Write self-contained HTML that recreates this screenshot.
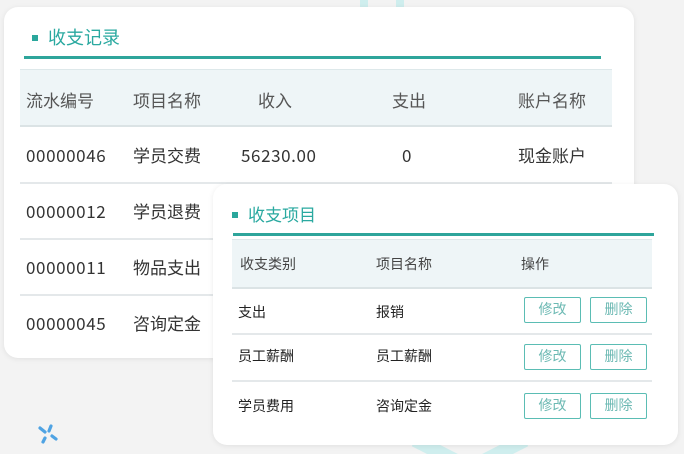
<!DOCTYPE html>
<html><head><meta charset="utf-8"><style>
*{margin:0;padding:0;box-sizing:border-box}
body{width:684px;height:454px;background:#f3f3f3;position:relative;overflow:hidden;font-family:"Noto Sans CJK SC","Liberation Sans",sans-serif}
.card{position:absolute;background:#fff;border-radius:14px;box-shadow:0 1px 6px rgba(0,0,0,.08)}
.t{position:absolute;white-space:nowrap;line-height:20px}
.sq{position:absolute;background:#2aa79c}
.ul{position:absolute;background:#2ea59b}
.hd{position:absolute;background:#eef5f7;border-top:1px solid #dde8ea;border-bottom:2px solid #dbe3e5}
.ln{position:absolute;height:2px;background:#e4e8ea}
.btn{position:absolute;width:57px;height:26px;border:1.5px solid #5bbdb4;border-radius:2px;color:#6cb9b3;font-size:14px;text-align:center;line-height:23px}
.n{letter-spacing:0.6px}
</style></head><body>
<div style="position:absolute;left:360px;top:0;width:8px;height:16px;background:#cfeeee"></div>
<div style="position:absolute;left:396px;top:0;width:8px;height:16px;background:#cfeeee"></div>
<svg style="position:absolute;left:410px;top:438px" width="120" height="16"><path d="M5 2 L60 30 L115 2" stroke="#cfeeee" stroke-width="14" fill="none"/></svg>

<div class="card" style="left:4px;top:7px;width:630px;height:351px">
<div class="sq" style="left:28px;top:28px;width:6px;height:6px"></div>
<div class="t" style="left:44px;top:20px;font-size:18px;color:#2aa9a0">收支记录</div>
<div class="ul" style="left:20px;top:49px;width:577px;height:3px"></div>
<div class="hd" style="left:16px;top:62px;width:592px;height:58px"></div>
<div class="t" style="left:22px;top:83px;font-size:17px;color:#555">流水编号</div>
<div class="t" style="left:129px;top:83px;font-size:17px;color:#555">项目名称</div>
<div class="t" style="left:254px;top:83px;font-size:17px;color:#555">收入</div>
<div class="t" style="left:388px;top:83px;font-size:17px;color:#555">支出</div>
<div class="t" style="left:514px;top:83px;font-size:17px;color:#555">账户名称</div>
<div class="t n" style="left:22px;top:138px;font-size:17px;color:#333">00000046</div>
<div class="t" style="left:129px;top:138px;font-size:17px;color:#333">学员交费</div>
<div class="t n" style="left:237px;top:138px;font-size:17px;color:#333">56230.00</div>
<div class="t" style="left:398px;top:138px;font-size:17px;color:#333">0</div>
<div class="t" style="left:514px;top:138px;font-size:17px;color:#333">现金账户</div>
<div class="ln" style="left:16px;top:175px;width:592px"></div>
<div class="t n" style="left:22px;top:194px;font-size:17px;color:#333">00000012</div>
<div class="t" style="left:129px;top:194px;font-size:17px;color:#333">学员退费</div>
<div class="ln" style="left:16px;top:231px;width:592px"></div>
<div class="t n" style="left:22px;top:250px;font-size:17px;color:#333">00000011</div>
<div class="t" style="left:129px;top:250px;font-size:17px;color:#333">物品支出</div>
<div class="ln" style="left:16px;top:287px;width:592px"></div>
<div class="t n" style="left:22px;top:306px;font-size:17px;color:#333">00000045</div>
<div class="t" style="left:129px;top:306px;font-size:17px;color:#333">咨询定金</div>
</div>

<svg style="position:absolute;left:36px;top:424px" width="24" height="22" viewBox="0 0 24 22"><g stroke="#4fa3e3" stroke-width="3.2" stroke-linecap="round"><line x1="4" y1="4" x2="9" y2="8"/><line x1="15" y1="2" x2="13" y2="7"/><line x1="16" y1="12" x2="20" y2="15"/><line x1="9" y1="14" x2="7" y2="18"/></g></svg>

<div class="card" style="left:213px;top:184px;width:465px;height:261px">
<div class="sq" style="left:19px;top:28px;width:6px;height:6px"></div>
<div class="t" style="left:35px;top:20px;font-size:17px;color:#2aa9a0">收支项目</div>
<div class="ul" style="left:20px;top:49px;width:421px;height:3px"></div>
<div class="hd" style="left:19px;top:55px;width:420px;height:50px"></div>
<div class="t" style="left:27px;top:70px;font-size:14px;color:#444">收支类别</div>
<div class="t" style="left:163px;top:70px;font-size:14px;color:#444">项目名称</div>
<div class="t" style="left:308px;top:70px;font-size:14px;color:#444">操作</div>
<div class="t" style="left:25px;top:118px;font-size:14px;color:#222">支出</div>
<div class="t" style="left:163px;top:118px;font-size:14px;color:#222">报销</div>
<div class="btn" style="left:311px;top:113px">修改</div>
<div class="btn" style="left:377px;top:113px">删除</div>
<div class="ln" style="left:19px;top:149px;width:420px"></div>
<div class="t" style="left:25px;top:162px;font-size:14px;color:#222">员工薪酬</div>
<div class="t" style="left:163px;top:162px;font-size:14px;color:#222">员工薪酬</div>
<div class="btn" style="left:311px;top:160px">修改</div>
<div class="btn" style="left:377px;top:160px">删除</div>
<div class="ln" style="left:19px;top:196px;width:420px"></div>
<div class="t" style="left:25px;top:212px;font-size:14px;color:#222">学员费用</div>
<div class="t" style="left:163px;top:212px;font-size:14px;color:#222">咨询定金</div>
<div class="btn" style="left:311px;top:209px">修改</div>
<div class="btn" style="left:377px;top:209px">删除</div>
</div>
</body></html>
